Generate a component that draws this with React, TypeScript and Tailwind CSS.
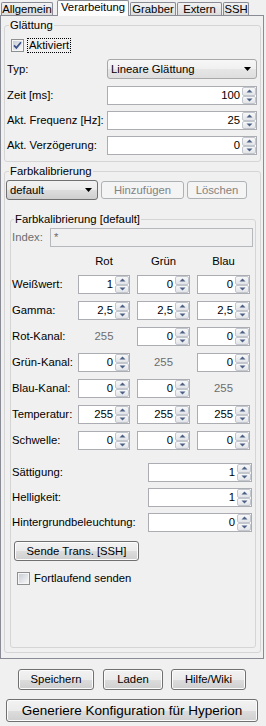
import React from "react";

function CheckBox({ checked }: { checked?: boolean }) {
  return (
    <svg width="13" height="13" viewBox="0 0 13 13" className="shrink-0">
      <defs>
        <linearGradient id="cbg" x1="0" y1="0" x2="1" y2="1">
          <stop offset="0" stopColor="#c9ced6" />
          <stop offset="1" stopColor="#f7f7f7" />
        </linearGradient>
      </defs>
      <rect x="0.5" y="0.5" width="12" height="12" fill="#f6f6f6" stroke="#8e8f8f" />
      <rect x="2" y="2" width="9" height="9" fill="url(#cbg)" />
      {checked && (
        <path d="M3 6.3 L5.4 8.9 L10 3.2" stroke="#3d5189" strokeWidth="1.7" fill="none" />
      )}
    </svg>
  );
}

function SpinHalf({ up }: { up?: boolean }) {
  return (
    <div className="flex-1 border border-[#c2c6cd] rounded-[2px] bg-[linear-gradient(to_bottom,#f8f8f9,#e2e4e8)] flex items-center justify-center">
      <svg width="7" height="4" viewBox="0 0 7 4">
        {up ? (
          <path d="M0.5 3.5 L3.5 0.5 L6.5 3.5 Z" fill="#4d6185" />
        ) : (
          <path d="M0.5 0.5 L3.5 3.5 L6.5 0.5 Z" fill="#4d6185" />
        )}
      </svg>
    </div>
  );
}

function Spin({ value, className }: { value: string; className: string }) {
  return (
    <div className={`${className} h-[19px] border border-[#abadb3] bg-white flex`}>
      <div className="flex-1 text-right pr-[2px] leading-[17px]">{value}</div>
      <div className="w-[14px] flex flex-col">
        <SpinHalf up />
        <SpinHalf />
      </div>
    </div>
  );
}

function Combo({ text, className, light }: { text: string; className: string; light?: boolean }) {
  return (
    <div
      className={`${className} h-[20px] border rounded-[3px] flex items-center ${
        light
          ? "border-[#a8a8a8] bg-[linear-gradient(to_bottom,#f7f7f7_0%,#f0f0f0_50%,#e6e6e6_51%,#dedede_100%)]"
          : "border-[#707070] bg-[linear-gradient(to_bottom,#f2f2f2_0%,#ebebeb_50%,#dddddd_51%,#cfcfcf_100%)]"
      }`}
    >
      <span className="flex-1 pl-[3px] leading-[18px]">{text}</span>
      <svg width="7" height="4" viewBox="0 0 7 4" className="mr-[5px]">
        <path d="M0 0 H7 L3.5 4 Z" fill="#000" />
      </svg>
    </div>
  );
}

function Button({
  text,
  className,
  disabled,
}: {
  text: string;
  className: string;
  disabled?: boolean;
}) {
  return (
    <div
      className={`${className} border rounded-[3px] flex items-center justify-center whitespace-nowrap ${
        disabled
          ? "border-[#adb2b5] bg-[#f4f4f4] text-[#838383]"
          : "border-[#707070] bg-[linear-gradient(to_bottom,#f2f2f2_0%,#ebebeb_50%,#dddddd_51%,#cfcfcf_100%)] shadow-[inset_0_0_0_1px_#fcfcfc]"
      }`}
    >
      {text}
    </div>
  );
}

function Tab({ text, className, selected }: { text: string; className: string; selected?: boolean }) {
  return (
    <div
      className={`${className} border-t border-l border-r border-[#898c95] rounded-t-[2px] text-center whitespace-nowrap ${
        selected
          ? "h-[16px] mb-[-1px] bg-[#fcfcfc] relative z-10 leading-[13px]"
          : "h-[13px] bg-[linear-gradient(to_bottom,#f2f2f2,#dcdcdc)] leading-[13px]"
      }`}
    >
      {text}
    </div>
  );
}

const rows: { label: string; v: [string, string, string]; dis?: number }[] = [
  { label: "Weißwert:", v: ["1", "0", "0"] },
  { label: "Gamma:", v: ["2,5", "2,5", "2,5"] },
  { label: "Rot-Kanal:", v: ["255", "0", "0"], dis: 0 },
  { label: "Grün-Kanal:", v: ["0", "255", "0"], dis: 1 },
  { label: "Blau-Kanal:", v: ["0", "0", "255"], dis: 2 },
  { label: "Temperatur:", v: ["255", "255", "255"] },
  { label: "Schwelle:", v: ["0", "0", "0"] },
];

export default function App() {
  return (
    <div className="w-[266px] h-[726px] bg-[#f0f0f0] font-['Liberation_Sans',Arial,sans-serif] text-[11.3px] leading-[13px] text-black overflow-hidden select-none">
      {/* Tabs */}
      <div className="h-[15px] flex items-end">
        <Tab text="Allgemein" className="ml-[1px] w-[52px]" />
        <Tab text="Verarbeitung" className="ml-[4px] w-[72px]" selected />
        <Tab text="Grabber" className="ml-[1px] w-[46px]" />
        <Tab text="Extern" className="ml-[1px] w-[45px]" />
        <Tab text="SSH" className="ml-[1px] w-[26px]" />
      </div>

      {/* Pane */}
      <div className="w-[264px] h-[644px] border border-[#898c95] bg-[#f0f0f0] pt-[3px]">
        {/* Glättung */}
        <fieldset className="ml-[3px] w-[257px] border border-[#d5d5d5] rounded-[3px] pb-[6px]">
          <legend className="ml-[4px] px-[1px]">Glättung</legend>
          <div className="flex flex-col">
            <div className="mt-[6px] h-[15px] flex items-center pl-[6px]">
              <CheckBox checked />
              <span className="ml-[3px] px-[1px] h-[15px] leading-[13px] border border-dotted border-black">
                Aktiviert
              </span>
            </div>
            <div className="mt-[6px] h-[20px] flex items-center justify-between pl-[2px] pr-[3px]">
              <span>Typ:</span>
              <Combo text="Lineare Glättung" className="w-[150px]" light />
            </div>
            <div className="mt-[7px] h-[19px] flex items-center justify-between pl-[2px] pr-[3px]">
              <span>Zeit [ms]:</span>
              <Spin value="100" className="w-[150px]" />
            </div>
            <div className="mt-[6px] h-[19px] flex items-center justify-between pl-[2px] pr-[3px]">
              <span>Akt. Frequenz [Hz]:</span>
              <Spin value="25" className="w-[150px]" />
            </div>
            <div className="mt-[6px] h-[19px] flex items-center justify-between pl-[2px] pr-[3px]">
              <span>Akt. Verzögerung:</span>
              <Spin value="0" className="w-[150px]" />
            </div>
          </div>
        </fieldset>

        {/* Farbkalibrierung */}
        <fieldset className="mt-[3px] ml-[3px] w-[257px] h-[488px] border border-[#d5d5d5] rounded-[3px]">
          <legend className="ml-[4px] px-[1px]">Farbkalibrierung</legend>
          <div className="mt-[2px] h-[20px] flex items-center pl-[1px]">
            <Combo text="default" className="w-[92px]" />
            <Button text="Hinzufügen" className="ml-[3px] w-[83px] h-[18px]" disabled />
            <Button text="Löschen" className="ml-[3px] w-[60px] h-[18px]" disabled />
          </div>

          <fieldset className="mt-[13px] ml-[5px] w-[246px] h-[435px] border border-[#d5d5d5] rounded-[3px]">
            <legend className="ml-[3px] px-[1px]">Farbkalibrierung [default]</legend>
            <div className="mt-[2px] h-[19px] flex items-center justify-between pl-[1px] pr-[2px]">
              <span className="text-[#6d6d6d]">Index:</span>
              <div className="w-[203px] h-[19px] border border-[#b5b9bd] bg-[#f0f0f0] pl-[3px] leading-[17px] text-[#6d6d6d]">
                *
              </div>
            </div>

            <div className="mt-[8px] pl-[1px] grid grid-cols-[59px_52px_53px_53px] gap-x-[7px] gap-y-[7px] items-center">
              <div />
              <div className="text-center h-[13px]">Rot</div>
              <div className="text-center h-[13px]">Grün</div>
              <div className="text-center h-[13px]">Blau</div>
              {rows.map((r) => (
                <React.Fragment key={r.label}>
                  <div className="h-[19px] flex items-center whitespace-nowrap">{r.label}</div>
                  {r.v.map((v, i) =>
                    r.dis === i ? (
                      <div key={i} className="h-[19px] flex items-center justify-center text-[#6d6d6d]">
                        {v}
                      </div>
                    ) : (
                      <Spin key={i} value={v} className="w-full" />
                    )
                  )}
                </React.Fragment>
              ))}
            </div>

            <div className="mt-[13px] flex flex-col gap-[6px] pl-[1px] pr-[3px]">
              <div className="h-[19px] flex items-center justify-between">
                <span>Sättigung:</span>
                <Spin value="1" className="w-[104px]" />
              </div>
              <div className="h-[19px] flex items-center justify-between">
                <span>Helligkeit:</span>
                <Spin value="1" className="w-[104px]" />
              </div>
              <div className="h-[19px] flex items-center justify-between">
                <span>Hintergrundbeleuchtung:</span>
                <Spin value="0" className="w-[104px]" />
              </div>
            </div>

            <Button text="Sende Trans. [SSH]" className="mt-[9px] ml-[3px] w-[125px] h-[20px]" />

            <div className="mt-[10px] h-[14px] flex items-center pl-[6px]">
              <CheckBox />
              <span className="ml-[4px]">Fortlaufend senden</span>
            </div>
          </fieldset>
        </fieldset>
      </div>

      {/* Bottom buttons */}
      <div className="mt-[10px] h-[21px] flex">
        <Button text="Speichern" className="ml-[18px] w-[76px] h-[21px]" />
        <Button text="Laden" className="ml-[9px] w-[60px] h-[21px]" />
        <Button text="Hilfe/Wiki" className="ml-[8px] w-[75px] h-[21px]" />
      </div>
      <Button
        text="Generiere Konfiguration für Hyperion"
        className="mt-[9px] ml-[6px] w-[252px] h-[23px] text-[13.5px]"
      />
    </div>
  );
}
